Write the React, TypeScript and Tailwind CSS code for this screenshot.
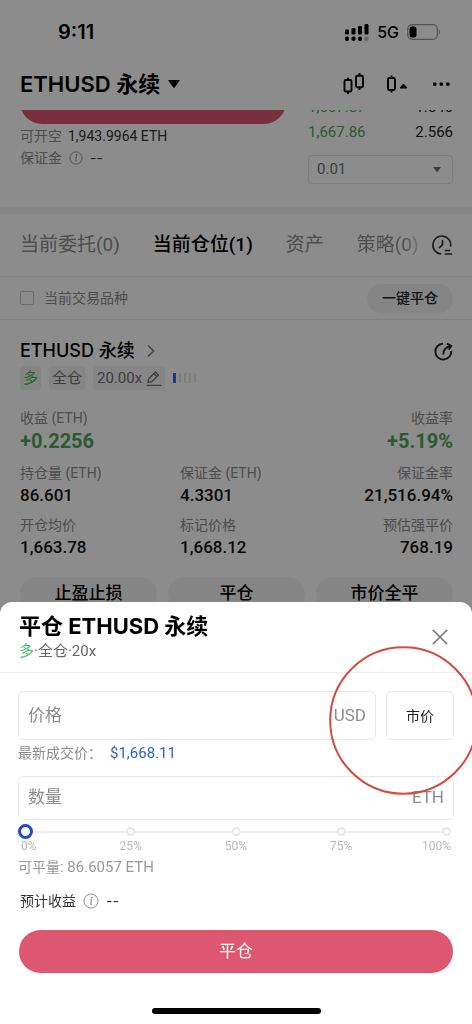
import { useState, type ReactNode } from "react";

const latin = "font-[Inter,'Noto_Sans_CJK_SC',sans-serif]";

function InfoIcon({ className }: { className: string }) {
  return (
    <svg viewBox="0 0 16 16" className={className} fill="none" stroke="currentColor" aria-hidden="true">
      <circle cx="8" cy="8" r="7" strokeWidth="1" />
      <path d="M7 6.8h1.6L7.6 11c-.1.6.4.7 1.2.1" strokeWidth="1.1" />
      <circle cx="8.8" cy="4.5" r=".5" fill="currentColor" />
    </svg>
  );
}

function StatusBar() {
  return (
    <div className={`flex h-[62px] items-center justify-between pt-0.5 pr-[31px] pl-[58px] ${latin}`}>
      <span className="text-xl font-semibold">9:11</span>
      <div className="flex items-center gap-2">
        <svg className="h-[17px] w-6" viewBox="0 0 24 17" aria-hidden="true">
          <rect x="0" y="5.5" width="4" height="5" rx="1.3" />
          <rect x="6.5" y="4" width="4" height="6.5" rx="1.3" />
          <rect x="13" y="2" width="4" height="8.5" rx="1.3" />
          <rect x="19.500" y="0" width="4" height="10.500" rx="1.3" />
          <rect x="0" y="12.5" width="4" height="4.500" rx="1.7" />
          <rect x="6.5" y="12.5" width="4" height="4.500" rx="1.7" />
          <rect x="13" y="12.5" width="4" height="4.500" rx="1.7" />
          <rect x="19.5" y="12.5" width="4" height="4.500" rx="1.7" fill="#bdbdbd" />
        </svg>
        <span className="text-base font-medium">5G</span>
        <svg className="h-4 w-[34px]" viewBox="0 0 34 16" aria-hidden="true">
          <rect x=".7" y=".7" width="29.6" height="14.6" rx="4.5" fill="none" stroke="#9a9a9a" strokeWidth="1.2" />
          <rect x="2.5" y="2.5" width="7" height="11" rx="2.2" />
          <path d="M31.8 5.5c1.6.8 1.6 4.2 0 5z" fill="#9a9a9a" />
        </svg>
      </div>
    </div>
  );
}

function Header() {
  return (
    <header className="flex h-12 items-center justify-between pr-[22px] pb-1 pl-5">
      <button className={`flex items-center gap-2 text-[22px] font-semibold ${latin}`}>
        ETHUSD 永续
        <svg className="h-2 w-3" viewBox="0 0 12 8" aria-hidden="true">
          <path d="M1 0h10q1 0 .4.9L6.700 7.4q-.7.9-1.4 0L.6.9Q0 0 1 0z" />
        </svg>
      </button>
      <div className="flex items-center gap-[21px]">
        <button aria-label="K线">
          <svg className="h-[22px] w-[22px]" viewBox="0 0 22 22" fill="none" stroke="currentColor" strokeWidth="1.9" aria-hidden="true">
            <rect x="1.5" y="7" width="7" height="11.5" rx="1.2" />
            <path d="M5 4.8V7M5 18.5v2.7" />
            <rect x="13" y="2.8" width="7" height="11.5" rx="1.2" />
            <path d="M16.5 0v2.8M16.5 14.300v2.700" />
          </svg>
        </button>
        <button aria-label="图表">
          <svg className="h-[22px] w-[22px]" viewBox="0 0 22 22" fill="none" stroke="currentColor" strokeWidth="1.9" aria-hidden="true">
            <rect x="2" y="5" width="7" height="12" rx="1.2" />
            <path d="M5.5 2.5V5M5.500 17v2.500" />
            <path d="M14 15l3.500-4 3.500 4z" fill="currentColor" strokeWidth="1" strokeLinejoin="round" />
          </svg>
        </button>
        <button aria-label="更多" className="ml-1">
          <svg className="h-1 w-[17px]" viewBox="0 0 17 4" aria-hidden="true">
            <rect x="0" y=".4" width="3.4" height="3.4" rx=".7" />
            <rect x="6.6" y=".4" width="3.4" height="3.4" rx=".7" />
            <rect x="13.2" y=".4" width="3.4" height="3.4" rx=".7" />
          </svg>
        </button>
      </div>
    </header>
  );
}

function OrderArea() {
  return (
    <section className="h-[97px] overflow-hidden">
      <div className="-mt-[30px] flex gap-[22px] pr-[19px] pl-5">
        <div className="flex-1">
          <button className="block h-11 w-full rounded-full bg-[#dc576f]" aria-label="卖出" />
          <div className="flex items-center gap-1.5 pt-px text-sm leading-[22px]">
            <span className="text-[#8c8c8c]">可开空</span>
            <span className="text-[#333]">1,943.9964 ETH</span>
          </div>
          <div className="flex items-center gap-[7px] text-sm leading-[22px] text-[#8c8c8c]">
            保证金
            <InfoIcon className="size-[14px]" />
            <span className={`text-[#333] ${latin}`}>--</span>
          </div>
        </div>
        <div className="w-[145px] pt-[15px] text-[15px] leading-[25px]">
          <div className="flex justify-between">
            <span className="text-[#4fa35b]">1,667.87</span>
            <span className="text-[#222]">1.546</span>
          </div>
          <div className="flex justify-between">
            <span className="text-[#4fa35b]">1,667.86</span>
            <span className="text-[#222]">2.566</span>
          </div>
          <div className="relative mt-2.5 text-[#707070]">
            <select aria-label="深度" className="block h-[29px] w-full appearance-none rounded-sm border border-[#e2e2e2] pl-2">
              <option>0.01</option>
            </select>
            <svg className="pointer-events-none absolute top-3 right-3 h-1.5 w-2" viewBox="0 0 8 6" fill="currentColor" aria-hidden="true">
              <path d="M0 0h8L4 5.5z" />
            </svg>
          </div>
        </div>
      </div>
    </section>
  );
}

function Tabs() {
  return (
    <nav className="flex h-[63px] items-center justify-between border-b border-[#ebebeb] pr-[19px] pl-5 text-[19px]">
      <div className="flex min-w-0 gap-[33px] whitespace-nowrap text-[#8c8c8c]">
        <button>当前委托(0)</button>
        <button className="font-medium text-black">当前仓位(1)</button>
        <button>资产</button>
        <button className="bg-linear-to-r from-[#8c8c8c] from-75% to-[#d4d4d4] bg-clip-text text-transparent">策略(0)</button>
      </div>
      <button aria-label="历史">
        <svg className="size-[22px]" viewBox="0 0 22 22" fill="none" stroke="#333" strokeWidth="1.7" strokeLinecap="round" aria-hidden="true">
          <path d="M9.500 19.900A9 9 0 1 1 19.800 12" />
          <path d="M11.500 6.500v4.200l-3 3" />
          <path d="M14.500 16.500h4M14.500 20h6" />
        </svg>
      </button>
    </nav>
  );
}

function Tag({ children, className }: { children: ReactNode; className: string }) {
  return <span className={`flex h-6 items-center rounded-sm text-[15px] ${className}`}>{children}</span>;
}

function Stat({ label, value, right }: { label: string; value: string; right?: boolean }) {
  return (
    <div className={right ? "text-right" : ""}>
      <div className="text-sm leading-5 text-[#8c8c8c]">{label}</div>
      <div className="text-[17px] leading-6 font-medium text-[#111]">{value}</div>
    </div>
  );
}

function Position() {
  return (
    <section className="pt-[18px] pr-[19px] pl-5">
      <div className="flex h-[26px] items-center justify-between">
        <button className={`flex items-center gap-3 text-lg font-medium ${latin}`}>
          ETHUSD 永续
          <svg className="h-3 w-2" viewBox="0 0 8 12" fill="none" stroke="#888" strokeWidth="1.7" aria-hidden="true">
            <path d="M1 .5L6.500 6 1 11.500" />
          </svg>
        </button>
        <button aria-label="分享">
          <svg className="size-[19px]" viewBox="0 0 19 19" fill="none" stroke="#222" strokeWidth="1.9" aria-hidden="true">
            <path d="M9 1.600A8 8 0 1 0 17.300 8.800" />
            <path d="M9.300 12.500c0-4.500 2.400-7.500 7.500-8.500" />
            <path d="M12.800 1.700l4.500 2.200-2.500 3.800" />
          </svg>
        </button>
      </div>
      <div className="mt-0.5 flex items-center gap-2">
        <Tag className="bg-[#edf5ee] px-[3px] text-[#4faf5d]">多</Tag>
        <Tag className="bg-[#f4f4f4] px-[3px] text-[#707070]">全仓</Tag>
        <Tag className="gap-1 bg-[#f4f4f4] pr-[3px] pl-1 text-[#707070]">
          20.00x
          <svg className="size-4" viewBox="0 0 16 16" fill="none" stroke="currentColor" strokeWidth="1.3" aria-hidden="true">
            <path d="M2 12.500l.7-3.800L9.500 2l3 3-6.700 6.700zM8 3.800l2.700 2.700M.5 15.300h15" />
          </svg>
        </Tag>
        <div className="flex h-2.5 gap-[3px]">
          <i className="w-[3px] bg-[#3c68ef]" />
          <i className="w-0.5 bg-[#e5e5e5]" />
          <i className="w-0.5 bg-[#e5e5e5]" />
          <i className="w-0.5 bg-[#e5e5e5]" />
          <i className="w-0.5 bg-[#e5e5e5]" />
        </div>
      </div>
      <div className="mt-[18px] flex justify-between text-sm leading-5 text-[#8c8c8c]">
        <span>收益 (ETH)</span>
        <span>收益率</span>
      </div>
      <div className="flex justify-between text-xl leading-[26px] font-bold text-[#4fa35b]">
        <span>+0.2256</span>
        <span>+5.19%</span>
      </div>
      <div className="mt-[9px] grid grid-cols-[160px_1fr_auto] gap-y-2">
        <Stat label="持仓量 (ETH)" value="86.601" />
        <Stat label="保证金 (ETH)" value="4.3301" />
        <Stat label="保证金率" value="21,516.94%" right />
        <Stat label="开仓均价" value="1,663.78" />
        <Stat label="标记价格" value="1,668.12" />
        <Stat label="预估强平价" value="768.19" right />
      </div>
      <div className="mt-[18px] grid grid-cols-3 gap-[11px] text-[17px] font-medium">
        <button className="h-[34px] rounded-full bg-[#f4f4f4]">止盈止损</button>
        <button className="h-[34px] rounded-full bg-[#f4f4f4]">平仓</button>
        <button className="h-[34px] rounded-full bg-[#f4f4f4]">市价全平</button>
      </div>
    </section>
  );
}

function CloseSheet() {
  const [percent, setPercent] = useState(0);
  return (
    <div role="dialog" aria-label="平仓" className="fixed inset-x-0 bottom-0 overflow-hidden rounded-t-xl bg-white">
      <div className="flex items-center justify-between border-b border-[#ededed] py-2.5 pr-6 pl-[19px]">
        <div>
          <h2 className={`text-[22px] leading-7 font-bold ${latin}`}>平仓 ETHUSD 永续</h2>
          <p className="text-[15px] leading-[22px] text-[#666]">
            <span className="text-[#4cc06a]">多</span>·全仓·20x
          </p>
        </div>
        <button aria-label="关闭">
          <svg className="size-4" viewBox="0 0 16 16" stroke="#777" strokeWidth="1.6" aria-hidden="true">
            <path d="M.8.8l14.400 14.400M15.200.8L.8 15.200" />
          </svg>
        </button>
      </div>
      <div className="px-[18px] pt-[18px] pb-2.5">
        <div className="flex gap-2.5">
          <label className="flex h-[49px] min-w-0 flex-1 items-center rounded-md border border-[#e8e8e8] px-[9px] text-[17px] text-[#8c8c8c]">
            <input className="min-w-0 flex-1 outline-none placeholder:text-[#8c8c8c]" placeholder="价格" aria-label="价格" />
            USD
          </label>
          <button className="w-[68px] rounded-md border border-[#e8e8e8] text-sm text-[#222]">市价</button>
        </div>
        <div className="flex items-center gap-2 pt-0.5 text-sm leading-[22px] text-[#8c8c8c]">
          <span>最新成交价：</span>
          <span className="text-[15px] text-[#2f5fd8]">$1,668.11</span>
        </div>
        <label className="mt-3 flex h-11 items-center rounded-md border border-[#e8e8e8] px-[9px] text-[17px] text-[#8c8c8c]">
          <input className="min-w-0 flex-1 outline-none placeholder:text-[#8c8c8c]" placeholder="数量" aria-label="数量" />
          ETH
        </label>
        <div className="relative mt-1 flex h-[15px] items-center">
          <div className="absolute inset-x-[7px] h-0.5 bg-[#ededed]" />
          <div className="absolute inset-x-[3px] flex justify-between">
            {[0, 25, 50, 75, 100].map((stop) => (
              <i key={stop} className="size-[9px] rounded-full border-2 border-[#e8e8e8] bg-white" />
            ))}
          </div>
          <input
            type="range"
            aria-label="平仓比例"
            value={percent}
            onChange={(e) => setPercent(Number(e.target.value))}
            className="relative m-0 h-[15px] w-full appearance-none bg-transparent [&::-webkit-slider-thumb]:size-[15px] [&::-webkit-slider-thumb]:appearance-none [&::-webkit-slider-thumb]:rounded-full [&::-webkit-slider-thumb]:border-3 [&::-webkit-slider-thumb]:border-solid [&::-webkit-slider-thumb]:border-[#2148d0] [&::-webkit-slider-thumb]:bg-white"
          />
        </div>
        <div className="flex justify-between px-[3px] text-xs leading-[14px] text-[#b8b8b8]">
          <span className="flex w-[9px] justify-start">0%</span>
          <span className="flex w-[9px] justify-center">25%</span>
          <span className="flex w-[9px] justify-center">50%</span>
          <span className="flex w-[9px] justify-center">75%</span>
          <span className="flex w-[9px] justify-end">100%</span>
        </div>
        <p className="pt-[3px] text-[15px] leading-[22px] text-[#999]">
          <span className="text-sm">可平量</span>: 86.6057 ETH
        </p>
        <div className="mt-3 flex items-center gap-[7px] pl-0.5 text-sm leading-[22px] text-[#333]">
          预计收益
          <InfoIcon className="size-4 text-[#8a8f9a]" />
          <span className={latin}>--</span>
        </div>
        <div className="px-px pt-[18px]">
          <button className="block h-[43px] w-full rounded-full bg-[#dc576f] text-[17px] text-white">平仓</button>
        </div>
        <div className="mx-auto mt-[35px] h-1.5 w-[169px] rounded-full bg-black" />
      </div>
      <svg
        className="pointer-events-none absolute top-11 -right-[6px] size-[149px]"
        viewBox="0 0 149 149"
        fill="none"
        stroke="#d24b40"
        strokeWidth="2"
        aria-hidden="true"
      >
        <circle cx="74.5" cy="74.5" r="73.3" />
      </svg>
    </div>
  );
}

export default function App() {
  return (
    <div className="h-screen overflow-hidden bg-white font-[Roboto,'Noto_Sans_CJK_SC',sans-serif] text-black">
      <StatusBar />
      <Header />
      <OrderArea />
      <div className="h-[7px] bg-[#f5f5f5]" />
      <Tabs />
      <div className="flex h-[43px] items-center justify-between border-b border-[#ebebeb] pr-[19px] pl-5">
        <label className="flex items-center gap-2.5 text-sm text-[#8c8c8c]">
          <input type="checkbox" className="size-3.5 appearance-none rounded-xs border border-[#c4c4c4]" />
          当前交易品种
        </label>
        <button className="h-[29px] rounded-full bg-[#f2f2f2] px-[15px] text-sm font-medium text-[#222]">一键平仓</button>
      </div>
      <Position />
      <div className="fixed inset-0 bg-black/45" />
      <CloseSheet />
    </div>
  );
}
